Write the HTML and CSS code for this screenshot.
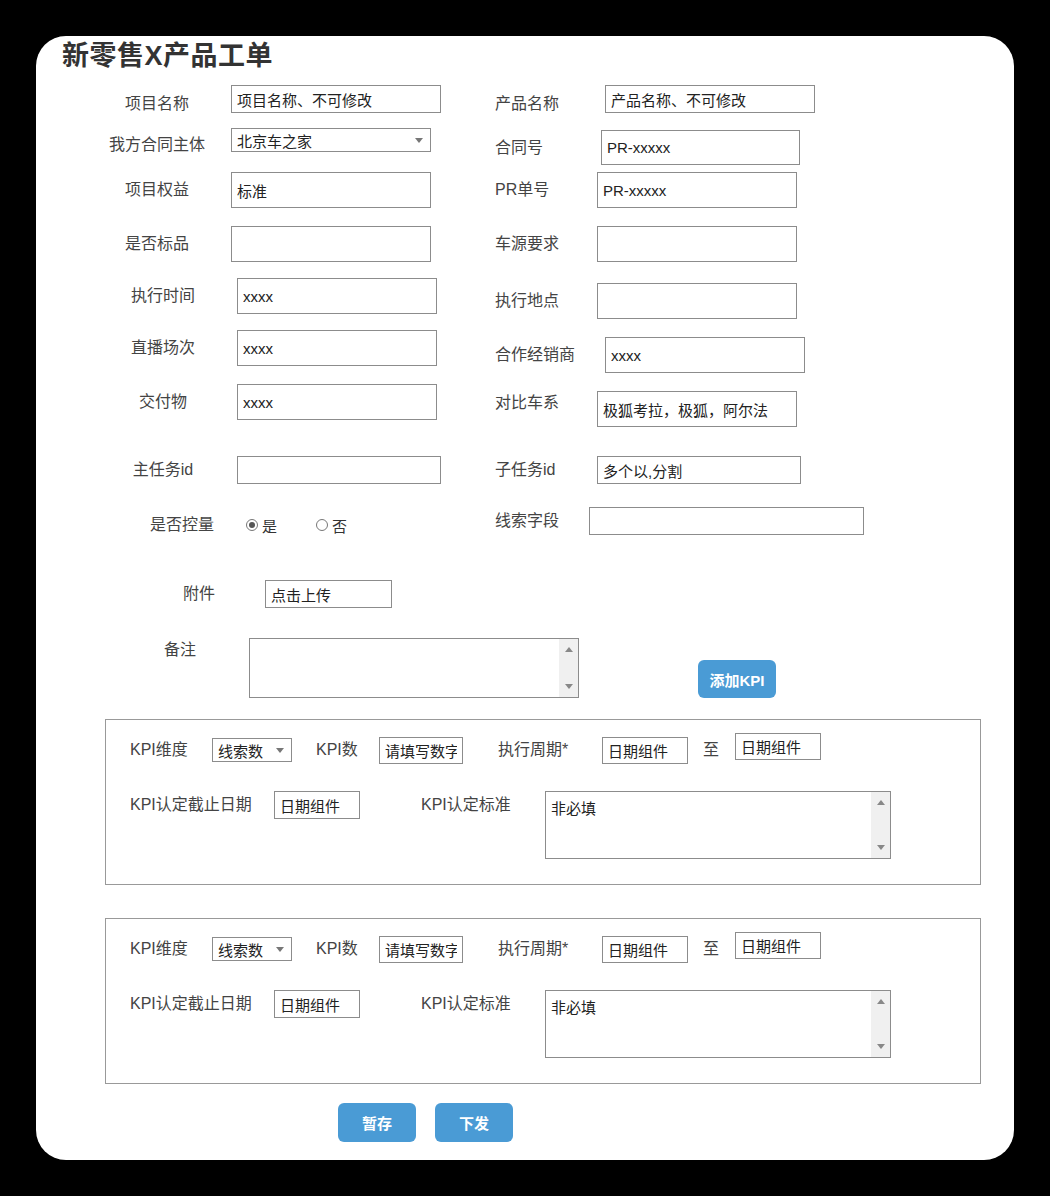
FILE: index.html
```html
<!DOCTYPE html>
<html>
<head>
    <meta charset="utf-8">
    <title>新零售X产品工单</title>
    <link rel="stylesheet" href="styles.css">
</head>
<body>
    <div class="card">
        <h1>新零售X产品工单</h1>

        <div class="top">
            <div class="col col-left">
                <div class="field">
                    <span class="label lower">项目名称</span>
                    <input class="box short wide" value="项目名称、不可修改">
                </div>
                <div class="field">
                    <span class="label lower">我方合同主体</span>
                    <div class="select">北京车之家<span class="caret"></span></div>
                </div>
                <div class="field">
                    <span class="label">项目权益</span>
                    <input class="box" value="标准">
                </div>
                <div class="field">
                    <span class="label">是否标品</span>
                    <input class="box">
                </div>
                <div class="field inset">
                    <span class="label">执行时间</span>
                    <input class="box" value="xxxx">
                </div>
                <div class="field inset">
                    <span class="label">直播场次</span>
                    <input class="box" value="xxxx">
                </div>
                <div class="field inset">
                    <span class="label">交付物</span>
                    <input class="box" value="xxxx">
                </div>
                <div class="field inset">
                    <span class="label">主任务id</span>
                    <input class="box short mid">
                </div>
                <div class="field field-radio">
                    <span class="label">是否控量</span>
                    <label class="radio"><span class="dot checked"></span>是</label>
                    <label class="radio"><span class="dot"></span>否</label>
                </div>
                <div class="field field-upload">
                    <span class="label">附件</span>
                    <input class="box short upload" value="点击上传">
                </div>
                <div class="field field-note">
                    <span class="label">备注</span>
                    <div class="memo note">
                        <div class="memo-text"></div>
                        <div class="scroll"><span class="arrow-up"></span><span class="arrow-down"></span></div>
                    </div>
                </div>
            </div>

            <div class="col col-right">
                <div class="field">
                    <span class="label lower">产品名称</span>
                    <input class="box short wide push" value="产品名称、不可修改">
                </div>
                <div class="field">
                    <span class="label">合同号</span>
                    <input class="box tall push-sm" value="PR-xxxxx">
                </div>
                <div class="field">
                    <span class="label">PR单号</span>
                    <input class="box" value="PR-xxxxx">
                </div>
                <div class="field">
                    <span class="label">车源要求</span>
                    <input class="box">
                </div>
                <div class="field">
                    <span class="label">执行地点</span>
                    <input class="box">
                </div>
                <div class="field">
                    <span class="label">合作经销商</span>
                    <input class="box push" value="xxxx">
                </div>
                <div class="field">
                    <span class="label higher">对比车系</span>
                    <input class="box" value="极狐考拉，极狐，阿尔法">
                </div>
                <div class="field">
                    <span class="label">子任务id</span>
                    <input class="box short mid" value="多个以,分割">
                </div>
                <div class="field">
                    <span class="label">线索字段</span>
                    <input class="box short long pull">
                </div>
                <div>
                    <button class="btn btn-add" type="button">添加KPI</button>
                </div>
            </div>
        </div>

        <div class="kpi">
            <div class="kpi-row">
                <span class="label">KPI维度</span>
                <div class="select small">线索数<span class="caret"></span></div>
                <span class="label">KPI数</span>
                <input class="box date" value="请填写数字">
                <span class="label">执行周期*</span>
                <input class="box date" value="日期组件">
                <span class="label">至</span>
                <input class="box date end" value="日期组件">
            </div>
            <div class="kpi-row2">
                <span class="label">KPI认定截止日期</span>
                <input class="box short date" value="日期组件">
                <span class="label">KPI认定标准</span>
                <div class="memo rule">
                    <div class="memo-text">非必填</div>
                    <div class="scroll"><span class="arrow-up"></span><span class="arrow-down"></span></div>
                </div>
            </div>
        </div>

        <div class="kpi kpi-next">
            <div class="kpi-row">
                <span class="label">KPI维度</span>
                <div class="select small">线索数<span class="caret"></span></div>
                <span class="label">KPI数</span>
                <input class="box date" value="请填写数字">
                <span class="label">执行周期*</span>
                <input class="box date" value="日期组件">
                <span class="label">至</span>
                <input class="box date end" value="日期组件">
            </div>
            <div class="kpi-row2">
                <span class="label">KPI认定截止日期</span>
                <input class="box short date" value="日期组件">
                <span class="label">KPI认定标准</span>
                <div class="memo rule">
                    <div class="memo-text">非必填</div>
                    <div class="scroll"><span class="arrow-up"></span><span class="arrow-down"></span></div>
                </div>
            </div>
        </div>

        <div class="actions">
            <button class="btn" type="button">暂存</button>
            <button class="btn" type="button">下发</button>
        </div>
    </div>
</body>
</html>
```

FILE: styles.css
```css
body {
    margin: 0;
    background-color: #000;
    font-family: "Liberation Sans", "Noto Sans CJK SC", sans-serif;
    color: #444;
}

.card {
    width: 978px;
    height: 1124px;
    margin: 36px;
    background-color: #fff;
    border-radius: 30px;
    box-sizing: border-box;
    overflow: hidden;
}

h1 {
    margin: 0;
    padding-left: 26px;
    height: 40px;
    line-height: 40px;
    font-size: 27px;
    font-weight: bold;
    color: #333;
    letter-spacing: 0.5px;
}

/* top form */
.top {
    display: flex;
    padding-top: 9px;
}

.col {
    display: grid;
    align-items: start;
}

.col-left {
    width: 434px;
    grid-template-rows: 42px 45px 54px 52px 52px 54px 72px 55px 69px 58px auto;
}

.col-right {
    flex: 1;
    grid-template-rows: 45px 42px 54px 57px 54px 54px 65px 51px 153px auto;
}

.field {
    display: flex;
    align-items: center;
}

.label {
    font-size: 16px;
    line-height: 16px;
    white-space: nowrap;
}

.col-left .field {
    padding-left: 56px;
}

.col-left .label {
    width: 130px;
    margin-right: 9px;
    text-align: center;
}

.col-left .inset {
    padding-left: 62px;
}

.col-right .field {
    padding-left: 25px;
}

.col-right .label {
    width: 102px;
}

.lower {
    margin-top: 10px;
}

.higher {
    margin-bottom: 12px;
}

/* inputs */
.box {
    width: 200px;
    height: 36px;
    margin: 0;
    padding: 0 5px;
    border: 1px solid #8c8c8c;
    box-sizing: border-box;
    font-family: inherit;
    font-size: 15px;
    color: #222;
    background-color: #fff;
    outline: none;
}

.short {
    height: 28px;
}

.tall {
    width: 199px;
    height: 35px;
}

.wide {
    width: 210px;
}

.mid {
    width: 204px;
}

.long {
    width: 275px;
}

.box.push {
    margin-left: 8px;
}

.box.push-sm {
    margin-left: 4px;
}

.box.pull {
    margin-left: -8px;
}

.select {
    display: flex;
    align-items: center;
    justify-content: space-between;
    width: 200px;
    height: 24px;
    padding-left: 5px;
    border: 1px solid #8c8c8c;
    box-sizing: border-box;
    font-size: 15px;
    color: #222;
}

.select.small {
    width: 80px;
}

.caret {
    margin-right: 7px;
    border-left: 4px solid transparent;
    border-right: 4px solid transparent;
    border-top: 5px solid #777;
}

/* radio row */
.field-radio {
    height: 28px;
}

.col-left .field-radio .label {
    width: 80px;
    margin-left: 50px;
    margin-right: 0;
}

.radio {
    display: flex;
    align-items: center;
    gap: 4px;
    margin-left: 24px;
    font-size: 15px;
    color: #333;
}

.radio + .radio {
    margin-left: 39px;
}

.dot {
    width: 12px;
    height: 12px;
    border: 1px solid #777;
    border-radius: 50%;
    box-sizing: border-box;
}

.dot.checked::after {
    content: "";
    display: block;
    width: 6px;
    height: 6px;
    margin: 2px;
    border-radius: 50%;
    background-color: #555;
}

.col-left .field-upload .label {
    width: 70px;
    margin-left: 72px;
    margin-right: 0;
}

.upload {
    width: 127px;
    margin-left: 31px;
}

.field-note {
    align-items: flex-start;
}

.col-left .field-note .label {
    width: 60px;
    margin-left: 58px;
    margin-right: 0;
    line-height: 24px;
}

/* fake textarea with scrollbar */
.memo {
    display: flex;
    border: 1px solid #8c8c8c;
    box-sizing: border-box;
}

.note {
    width: 330px;
    height: 60px;
    margin-left: 39px;
}

.rule {
    width: 346px;
    height: 68px;
}

.memo-text {
    flex: 1;
    padding: 5px;
    font-size: 15px;
    color: #222;
}

.scroll {
    display: flex;
    flex-direction: column;
    justify-content: space-between;
    align-items: center;
    width: 19px;
    padding: 8px 0;
    background-color: #f0f0f0;
}

.arrow-up {
    border-left: 4px solid transparent;
    border-right: 4px solid transparent;
    border-bottom: 5px solid #888;
}

.arrow-down {
    border-left: 4px solid transparent;
    border-right: 4px solid transparent;
    border-top: 5px solid #888;
}

/* buttons */
.btn {
    width: 78px;
    height: 39px;
    border: none;
    border-radius: 6px;
    background-color: #4a9bd5;
    color: #fff;
    font-family: inherit;
    font-size: 15px;
    font-weight: bold;
    cursor: pointer;
}

.btn-add {
    height: 38px;
    margin-left: 228px;
}

/* KPI blocks */
.kpi {
    width: 876px;
    height: 166px;
    margin: 21px 0 0 69px;
    padding: 16px 0 0 24px;
    border: 1px solid #999;
    box-sizing: border-box;
}

.kpi-next {
    margin-top: 33px;
}

.kpi-row {
    display: grid;
    grid-template-columns: 82px 104px 63px 119px 104px 101px 32px 86px;
    align-items: center;
    height: 28px;
}

.kpi-row2 {
    display: grid;
    grid-template-columns: 144px 147px 124px 346px;
    align-items: start;
    margin-top: 27px;
}

.kpi-row2 .label {
    line-height: 28px;
}

.date {
    width: 86px;
    height: 27px;
}

.kpi-row2 .date {
    height: 28px;
}

.kpi-row .box:first-of-type {
    width: 84px;
}

.end {
    margin-top: -8px;
}

.actions {
    display: flex;
    gap: 19px;
    margin-top: 19px;
    padding-left: 302px;
}
```
